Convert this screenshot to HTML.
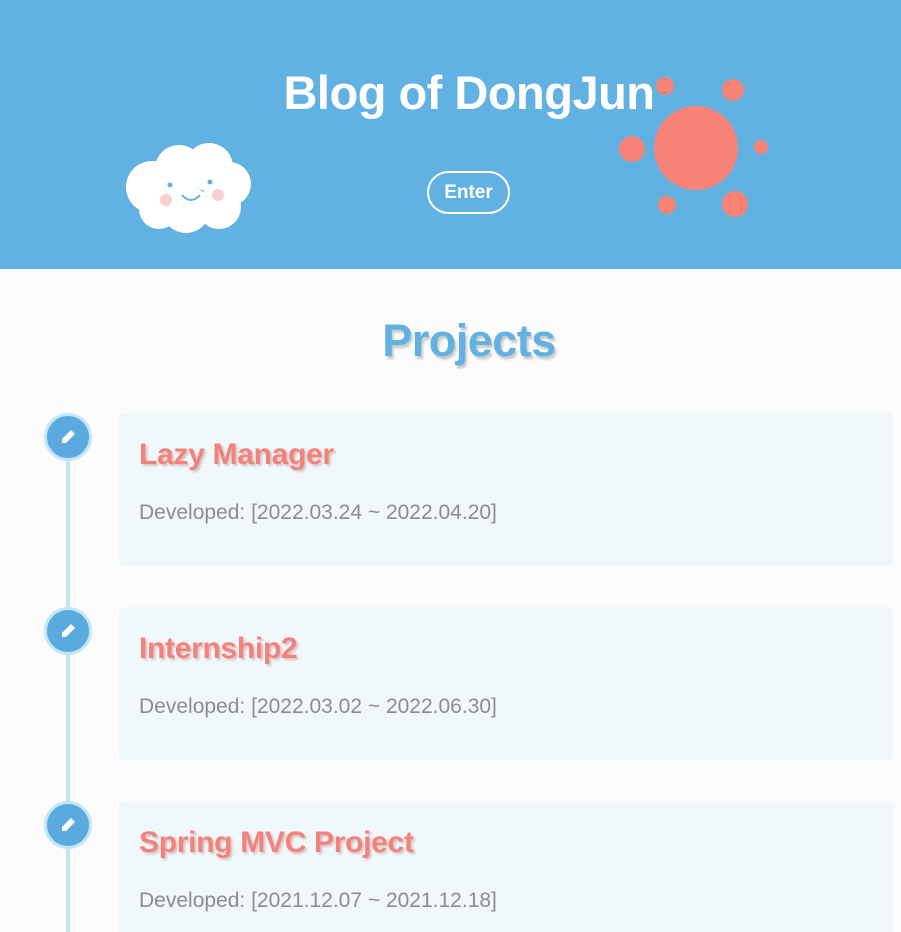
<!DOCTYPE html>
<html><head><meta charset="utf-8"><style>
html,body{margin:0;width:901px;height:932px;overflow:hidden}
body{background:#fcfcfc;font-family:"Liberation Sans","DejaVu Sans",sans-serif;position:relative}
.hdr{position:absolute;left:0;top:0;width:901px;height:269px;background:#61b1e3}
.title{position:absolute;left:0;width:938px;top:65px;text-align:center;color:#fff;font-weight:bold;font-size:47px;letter-spacing:-0.5px}
.btn{position:absolute;left:427px;top:171px;width:79px;height:39px;border:2px solid #fff;border-radius:22px;color:#fff;font-weight:bold;font-size:19px;text-align:center;line-height:39px}
.c{position:absolute;border-radius:50%;background:#f78377}
h2{position:absolute;left:0;width:938px;top:315px;margin:0;text-align:center;color:#61b1e3;font-size:45px;font-weight:bold;text-shadow:2px 3px 2px #c9c9c9;letter-spacing:-0.5px}
.line{position:absolute;left:66px;top:440px;width:4px;height:500px;background:#c1e6f5}
.card{position:absolute;left:119px;width:774px;height:153px;background:#f1f8fc;border-radius:5px}
.card h3{position:absolute;left:20px;top:25px;margin:0;color:#f3837a;font-size:30px;font-weight:bold;text-shadow:2px 2px 2px #d4c4c4;letter-spacing:-0.3px;white-space:nowrap}
.card p{position:absolute;left:20px;top:88px;margin:0;color:#8c8c8c;font-size:21px;white-space:nowrap}
.ic{position:absolute;left:44px;width:42px;height:42px;border-radius:50%;background:#5aaae0;border:3px solid #c1e6f5}
.ic svg{position:absolute;left:12px;top:12px}
</style></head><body>
<div class="hdr">
<div class="title">Blog of DongJun</div>
<div class="btn">Enter</div>
<div class="c" style="left:654px;top:106px;width:84px;height:84px"></div>
<div class="c" style="left:656px;top:77px;width:18px;height:18px"></div>
<div class="c" style="left:722px;top:79px;width:22px;height:22px"></div>
<div class="c" style="left:619px;top:136px;width:26px;height:26px"></div>
<div class="c" style="left:754px;top:140px;width:14px;height:14px"></div>
<div class="c" style="left:658px;top:196px;width:18px;height:18px"></div>
<div class="c" style="left:722px;top:191px;width:26px;height:26px"></div>
<svg style="position:absolute;left:124px;top:139px" width="130" height="95">
<g fill="#fff">
<circle cx="28" cy="48" r="26"/><circle cx="55" cy="30" r="24"/><circle cx="85" cy="28" r="24"/><circle cx="105" cy="45" r="22"/><circle cx="95" cy="68" r="22"/><circle cx="62" cy="70" r="24"/><circle cx="35" cy="70" r="20"/></g>
<circle cx="46" cy="46" r="2.5" fill="#61b1e3"/><circle cx="86" cy="43" r="2.5" fill="#61b1e3"/>
<path d="M58 56 q9 10 18 0" stroke="#61b1e3" stroke-width="2" fill="none"/>
<circle cx="42" cy="61" r="6" fill="#f9c3c3" opacity=".8"/><circle cx="94" cy="56" r="6" fill="#f9c3c3" opacity=".8"/>
</svg>
</div>
<h2>Projects</h2>
<div class="line"></div>
<div class="card" style="top:413px"><h3>Lazy Manager</h3><p>Developed: [2022.03.24 ~ 2022.04.20]</p></div>
<div class="card" style="top:607px"><h3>Internship2</h3><p>Developed: [2022.03.02 ~ 2022.06.30]</p></div>
<div class="card" style="top:801px"><h3>Spring MVC Project</h3><p>Developed: [2021.12.07 ~ 2021.12.18]</p></div>
<div class="ic" style="top:413px"><svg width="18" height="18" viewBox="0 0 18 18"><path d="M12 2 L16 6 L7 15 L3 15 L3 11 Z" fill="#fff"/></svg></div>
<div class="ic" style="top:607px"><svg width="18" height="18" viewBox="0 0 18 18"><path d="M12 2 L16 6 L7 15 L3 15 L3 11 Z" fill="#fff"/></svg></div>
<div class="ic" style="top:801px"><svg width="18" height="18" viewBox="0 0 18 18"><path d="M12 2 L16 6 L7 15 L3 15 L3 11 Z" fill="#fff"/></svg></div>
</body></html>
